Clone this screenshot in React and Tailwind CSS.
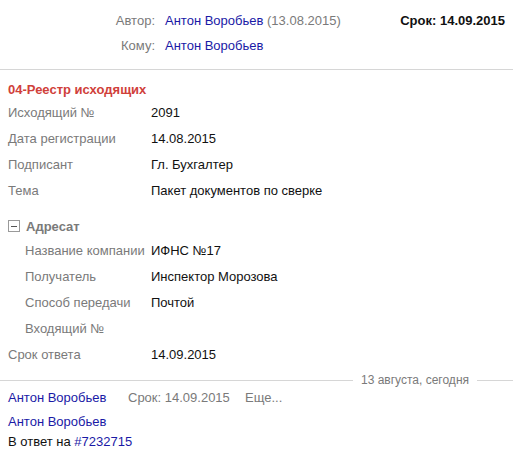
import React from 'react';

const Row = ({ label, value, indent = false }) => (
  <div className="flex h-[26px] items-center">
    <div className={`${indent ? 'pl-[17px]' : ''} w-[143px] shrink-0 whitespace-nowrap text-[#7a7a7a]`}>{label}</div>
    <div className="text-[#111]">{value}</div>
  </div>
);

const MinusBox = () => (
  <span className="inline-flex h-[12px] w-[12px] items-center justify-center border border-[#9a9a9a] bg-white">
    <span className="block h-[1px] w-[6px] bg-[#555]" />
  </span>
);

export default function App() {
  return (
    <div className="w-[513px] h-[462px] bg-white text-[13px] leading-none" style={{ fontFamily: '"Liberation Sans", Arial, sans-serif' }}>
      <div className="flex pt-[14px] pb-[17px] pr-[8px]">
        <div className="flex flex-col gap-[12px]">
          <div className="flex">
            <span className="w-[155px] text-right text-[#7a7a7a]">Автор:</span>
            <span className="pl-[10px] text-[#1a1aa6]">Антон Воробьев <span className="text-[#7a7a7a]">(13.08.2015)</span></span>
          </div>
          <div className="flex">
            <span className="w-[155px] text-right text-[#7a7a7a]">Кому:</span>
            <span className="pl-[10px] text-[#1a1aa6]">Антон Воробьев</span>
          </div>
        </div>
        <div className="ml-auto pt-[-1px] font-bold text-[#111]">Срок: 14.09.2015</div>
      </div>
      <div className="h-px bg-[#d6d6d6]" />

      <div className="px-[8px] pt-[13px]">
        <div className="mb-[3px] font-bold text-[#d0403a]">04-Реестр исходящих</div>
        <Row label="Исходящий №" value="2091" />
        <Row label="Дата регистрации" value="14.08.2015" />
        <Row label="Подписант" value="Гл. Бухгалтер" />
        <Row label="Тема" value="Пакет документов по сверке" />

        <div className="mt-[12px] flex h-[22px] items-center gap-[6px]">
          <MinusBox />
          <span className="font-bold text-[#7a7a7a]">Адресат</span>
        </div>
        <Row indent label="Название компании" value="ИФНС №17" />
        <Row indent label="Получатель" value="Инспектор Морозова" />
        <Row indent label="Способ передачи" value="Почтой" />
        <Row indent label="Входящий №" value="" />
        <Row label="Срок ответа" value="14.09.2015" />
      </div>

      <div className="mt-[7px] flex items-center">
        <div className="h-px flex-1 bg-[#d6d6d6]" />
        <span className="px-[8px] text-[12px] text-[#7a7a7a]">13 августа, сегодня</span>
        <div className="h-px w-[36px] bg-[#d6d6d6]" />
      </div>

      <div className="px-[8px]">
        <div className="mt-[5px] flex">
          <span className="w-[120px] text-[#1a1aa6]">Антон Воробьев</span>
          <span className="w-[117px] text-[#7a7a7a]">Срок: 14.09.2015</span>
          <span className="text-[#7a7a7a]">Еще...</span>
        </div>
        <div className="mt-[11px] text-[#1a1aa6]">Антон Воробьев</div>
        <div className="mt-[7px] text-[#111]">В ответ на <span className="text-[#1a1aa6]">#7232715</span></div>
      </div>
    </div>
  );
}
